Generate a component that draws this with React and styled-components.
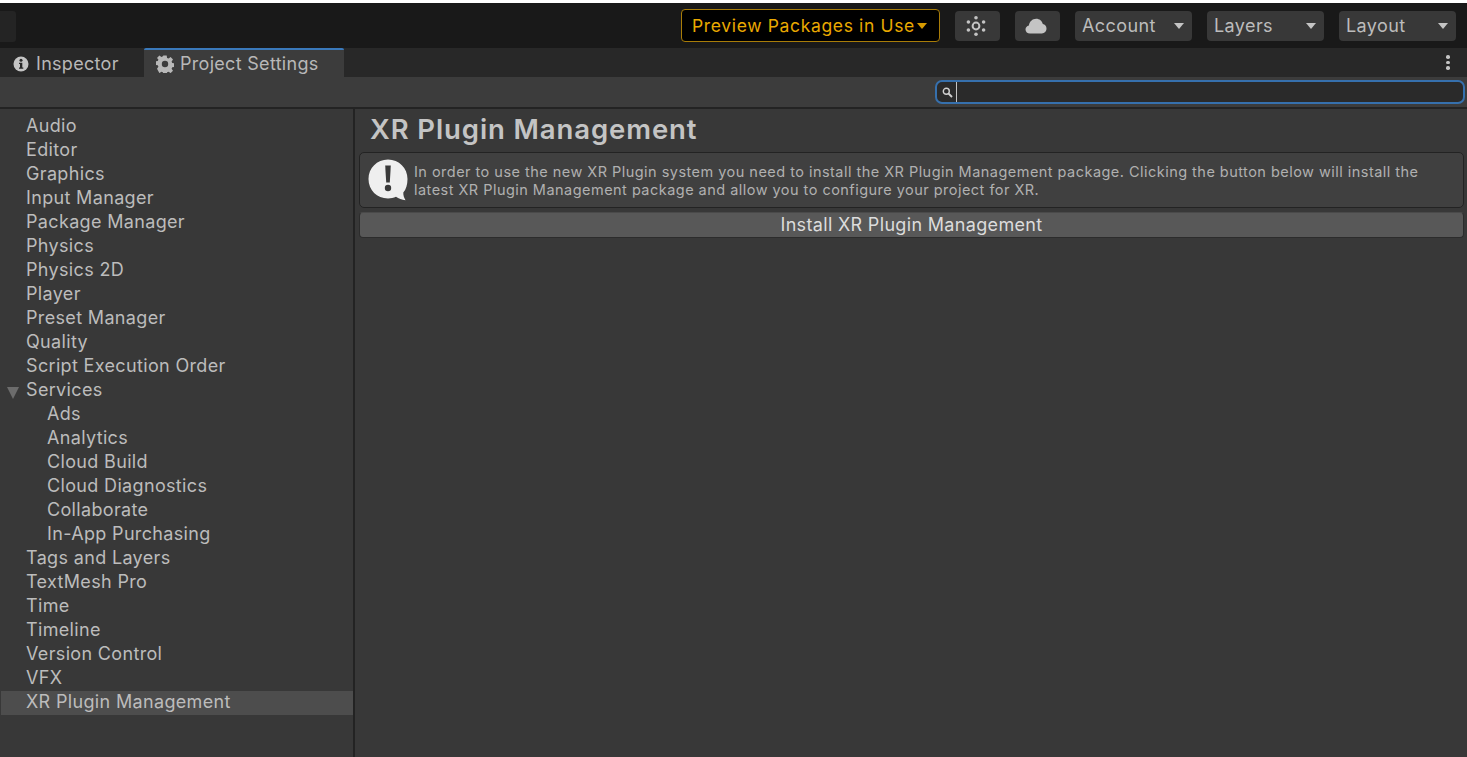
import React from "react";
import styled, { createGlobalStyle } from "styled-components";

const GlobalStyle = createGlobalStyle`
  html, body { margin: 0; padding: 0; background: #fff; overflow: hidden; }
  body { font-family: Inter, "Liberation Sans", sans-serif; }
`;

const Page = styled.div`
  width: 1467px;
  height: 757px;
  padding-top: 3px;
  box-sizing: border-box;
  display: flex;
  flex-direction: column;
  background: #383838;
  box-shadow: inset 0 3px 0 #fff;
  overflow: hidden;
`;

const Toolbar = styled.div`
  height: 45px;
  flex: none;
  background: #191919;
  display: flex;
  align-items: flex-start;
  padding-top: 6px;
  box-sizing: border-box;
`;

const ToolStub = styled.div`
  width: 16px;
  height: 31px;
  margin-top: 2px;
  background: #242424;
  border-radius: 0 3px 3px 0;
  margin-right: 665px;
`;

const PreviewButton = styled.div`
  width: 259px;
  height: 33px;
  box-sizing: border-box;
  background: #000;
  border: 1px solid #a87c08;
  border-radius: 4px;
  color: #eaa900;
  font-size: 17.5px;
  letter-spacing: 0.65px;
  display: flex;
  align-items: center;
  padding: 0 0 1px 10px;
  white-space: nowrap;
  margin-right: 15px;
`;

const PreviewCaret = styled.span`
  width: 0;
  height: 0;
  margin: 1px 0 0 2px;
  border-left: 5.5px solid transparent;
  border-right: 5.5px solid transparent;
  border-top: 6px solid #d69a00;
`;

const IconButton = styled.div`
  width: ${p => p.$w}px;
  height: 30px;
  margin-top: 2px;
  margin-right: ${p => p.$mr}px;
  padding-right: 3px;
  box-sizing: border-box;
  background: #383838;
  border-radius: 4px;
  display: flex;
  align-items: center;
  justify-content: center;
`;

const DropButton = styled.div`
  width: 117px;
  height: 30px;
  margin-top: 2px;
  margin-right: ${p => p.$mr}px;
  box-sizing: border-box;
  padding: 0 8px 1px 7px;
  background: #383838;
  border-radius: 4px;
  color: #bcbcbc;
  font-size: 18px;
  letter-spacing: 0.4px;
  display: flex;
  align-items: center;
  justify-content: space-between;
`;

const Caret = styled.span`
  width: 0;
  height: 0;
  margin-top: 1px;
  border-left: 5.5px solid transparent;
  border-right: 5.5px solid transparent;
  border-top: 6px solid #c4c4c4;
`;

const TabRow = styled.div`
  height: 29px;
  flex: none;
  background: #282828;
  display: flex;
  align-items: stretch;
  position: relative;
`;

const Tab = styled.div`
  width: ${p => p.$w}px;
  box-sizing: border-box;
  display: flex;
  align-items: center;
  gap: ${p => p.$gap}px;
  padding-left: ${p => p.$pad}px;
  font-size: 18px;
  letter-spacing: 0.3px;
  color: #b8b8b8;
  background: ${p => (p.$active ? "#3c3c3c" : "transparent")};
  border-top: 2px solid ${p => (p.$active ? "#3a79bb" : "transparent")};
  border-radius: ${p => (p.$active ? "2px 2px 0 0" : "0")};
`;

const MenuDots = styled.div`
  margin-left: auto;
  width: 38px;
  display: flex;
  flex-direction: column;
  align-items: center;
  justify-content: center;
  gap: 2px;
`;

const Dot = styled.span`
  width: 3.5px;
  height: 3.5px;
  border-radius: 50%;
  background: #c4c4c4;
`;

const SearchRow = styled.div`
  height: 32px;
  flex: none;
  box-sizing: border-box;
  background: #3c3c3c;
  border-bottom: 2px solid #232323;
  display: flex;
  justify-content: flex-end;
  padding: 3px 2px 0 0;
`;

const SearchBox = styled.div`
  width: 530px;
  height: 24px;
  box-sizing: border-box;
  background: #2a2a2a;
  border: 2px solid #3670ad;
  border-radius: 7px;
  display: flex;
  align-items: center;
  padding-left: 5px;
`;

const SearchCursor = styled.span`
  width: 1px;
  height: 20px;
  margin-left: 3px;
  background: #c4c4c4;
`;

const Body = styled.div`
  flex: 1;
  display: flex;
  min-height: 0;
`;

const Sidebar = styled.div`
  width: 355px;
  flex: none;
  box-sizing: border-box;
  border-right: 2px solid #232323;
  padding: 6px 0 0 1px;
`;

const Row = styled.div`
  height: 24px;
  line-height: 22px;
  position: relative;
  padding-left: ${p => (p.$child ? 46 : 25)}px;
  font-size: 18px;
  letter-spacing: 0.34px;
  color: #bcbcbc;
  white-space: nowrap;
  background: ${p => (p.$selected ? "#4d4d4d" : "transparent")};
`;

const Arrow = styled.span`
  position: absolute;
  left: 6px;
  top: 8px;
  width: 0;
  height: 0;
  border-left: 6.5px solid transparent;
  border-right: 6.5px solid transparent;
  border-top: 12px solid #6c6c6c;
`;

const Content = styled.div`
  flex: 1;
  min-width: 0;
  padding: 0 3px 0 4px;
  display: flex;
  flex-direction: column;
`;

const Title = styled.div`
  height: 43px;
  line-height: 41px;
  padding-left: 11px;
  font-size: 27.5px;
  font-weight: 600;
  letter-spacing: 0.9px;
  color: #c4c4c4;
  white-space: nowrap;
`;

const HelpBox = styled.div`
  height: 56px;
  box-sizing: border-box;
  background: #404040;
  border: 1px solid #232323;
  border-radius: 5px;
  display: flex;
  align-items: center;
  gap: 6px;
  padding-left: 8px;
`;

const HelpText = styled.div`
  margin-top: 2px;
  font-size: 14.5px;
  line-height: 18px;
  letter-spacing: 0.47px;
  color: #b0b0b0;
  white-space: nowrap;
`;

const InstallButton = styled.div`
  height: 26px;
  margin-top: 4px;
  padding-bottom: 2px;
  box-sizing: border-box;
  background: #585858;
  border: 1px solid #2c2c2c;
  border-top-color: #4a4a4a;
  border-radius: 4px;
  display: flex;
  align-items: center;
  justify-content: center;
  font-size: 18px;
  letter-spacing: 0.33px;
  color: #dcdcdc;
`;

const items = [
  { label: "Audio" },
  { label: "Editor" },
  { label: "Graphics" },
  { label: "Input Manager" },
  { label: "Package Manager" },
  { label: "Physics" },
  { label: "Physics 2D" },
  { label: "Player" },
  { label: "Preset Manager" },
  { label: "Quality" },
  { label: "Script Execution Order" },
  { label: "Services", open: true },
  { label: "Ads", child: true },
  { label: "Analytics", child: true },
  { label: "Cloud Build", child: true },
  { label: "Cloud Diagnostics", child: true },
  { label: "Collaborate", child: true },
  { label: "In-App Purchasing", child: true },
  { label: "Tags and Layers" },
  { label: "TextMesh Pro" },
  { label: "Time" },
  { label: "Timeline" },
  { label: "Version Control" },
  { label: "VFX" },
  { label: "XR Plugin Management", selected: true },
];

const SunIcon = () => (
  <svg width="20" height="20" viewBox="0 0 20 20" fill="#c4c4c4">
    <circle cx="10" cy="10" r="3.4" fill="none" stroke="#c4c4c4" strokeWidth="2" />
    <circle cx="10" cy="1.8" r="1.8" />
    <circle cx="10" cy="18.2" r="1.8" />
    <circle cx="2.4" cy="6" r="1.8" />
    <circle cx="17.6" cy="6" r="1.8" />
    <circle cx="2.4" cy="14" r="1.8" />
    <circle cx="17.6" cy="14" r="1.8" />
  </svg>
);

const CloudIcon = () => (
  <svg width="22" height="16" viewBox="0 0 22 16" fill="#c4c4c4">
    <path d="M5 15.5C2.4 15.5 .5 13.7 .5 11.4c0-2 1.4-3.6 3.4-4C4.5 3.6 7.5 .8 11.2 .8c3.3 0 6 2.2 6.6 5.3 2.2 .3 3.7 2.2 3.7 4.5 0 2.7-2 4.9-4.6 4.9H5z" />
  </svg>
);

const InfoIcon = () => (
  <svg width="16" height="16" viewBox="0 0 16 16">
    <circle cx="8" cy="8" r="7.5" fill="#c4c4c4" />
    <path d="M6 6.8h3.3v4.6h1v1.3H6v-1.3h1V8.1H6z" fill="#282828" />
    <circle cx="8" cy="4.3" r="1.5" fill="#282828" />
  </svg>
);

const GearIcon = () => (
  <svg width="18" height="18" viewBox="0 0 18 18" fill="#b8b8b8">
    <path
      fillRule="evenodd"
      d="M7.3 .5h3.4l.4 2.4 1.5 .6 2-1.4 2.4 2.4-1.4 2 .6 1.5 2.3 .4v3.4l-2.3 .4-.6 1.5 1.4 2-2.4 2.4-2-1.4-1.5 .6-.4 2.3H7.3l-.4-2.3-1.5-.6-2 1.4L1 13.7l1.4-2-.6-1.5-2.3-.4V6.4l2.3-.4 .6-1.5L1 2.9 3.4 .5l2 1.4 1.5-.6 .4-.8zM9 5.8a3.2 3.2 0 1 0 0 6.4 3.2 3.2 0 0 0 0-6.4z"
    />
  </svg>
);

const SearchIcon = () => (
  <svg width="11" height="11" viewBox="0 0 11 11" fill="none" stroke="#d0d0d0">
    <circle cx="4.3" cy="4.3" r="3" strokeWidth="1.4" />
    <path d="M6.6 6.6L10 10" strokeWidth="2" />
  </svg>
);

const AlertIcon = () => (
  <svg width="40" height="43" viewBox="0 0 40 43" style={{ flex: "none" }}>
    <path
      d="M20 .5C9 .5 .5 9 .5 20S9 39.5 20 39.5c3 0 5.5-.6 8-1.7 2.5 1.8 6 3 9.5 3.4-1.5-2.5-2.3-5-2.2-7.7C38 30.5 39.5 25.5 39.5 20 39.5 9 31 .5 20 .5z"
      fill="#efefef"
    />
    <path d="M17.2 6.5h5.6l-1 17h-3.6z" fill="#3a3a3a" />
    <circle cx="20" cy="29" r="3.2" fill="#3a3a3a" />
  </svg>
);

export default function App() {
  return (
    <Page>
      <GlobalStyle />
      <Toolbar>
        <ToolStub />
        <PreviewButton>
          Preview Packages in Use
          <PreviewCaret />
        </PreviewButton>
        <IconButton $w={45} $mr={15}>
          <SunIcon />
        </IconButton>
        <IconButton $w={45} $mr={15}>
          <CloudIcon />
        </IconButton>
        <DropButton $mr={15}>
          Account
          <Caret />
        </DropButton>
        <DropButton $mr={15}>
          Layers
          <Caret />
        </DropButton>
        <DropButton $mr={0}>
          Layout
          <Caret />
        </DropButton>
      </Toolbar>
      <TabRow>
        <Tab $w={144} $pad={13} $gap={7}>
          <InfoIcon />
          Inspector
        </Tab>
        <Tab $w={200} $pad={12} $gap={6} $active>
          <GearIcon />
          Project Settings
        </Tab>
        <MenuDots>
          <Dot />
          <Dot />
          <Dot />
        </MenuDots>
      </TabRow>
      <SearchRow>
        <SearchBox>
          <SearchIcon />
          <SearchCursor />
        </SearchBox>
      </SearchRow>
      <Body>
        <Sidebar>
          {items.map(item => (
            <Row key={item.label} $child={item.child} $selected={item.selected}>
              {item.open && <Arrow />}
              {item.label}
            </Row>
          ))}
        </Sidebar>
        <Content>
          <Title>XR Plugin Management</Title>
          <HelpBox>
            <AlertIcon />
            <HelpText>
              In order to use the new XR Plugin system you need to install the XR Plugin Management package. Clicking the button below will install the
              <br />
              latest XR Plugin Management package and allow you to configure your project for XR.
            </HelpText>
          </HelpBox>
          <InstallButton>Install XR Plugin Management</InstallButton>
        </Content>
      </Body>
    </Page>
  );
}
